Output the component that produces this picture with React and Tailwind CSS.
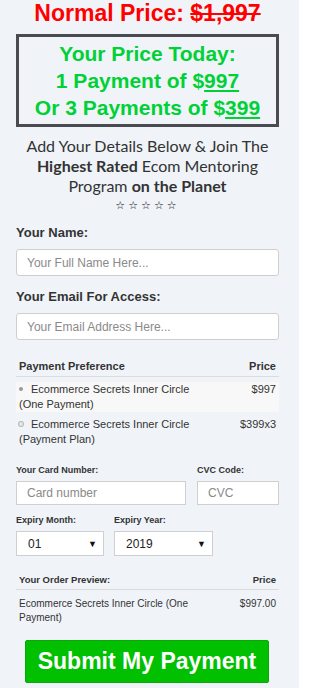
import React from "react";

const SANS = "font-['Liberation_Sans',Arial,sans-serif]";

const Field = ({ label, placeholder, className = "" }) => (
  <div className={className}>
    <div className="text-[13px] leading-[16px] font-bold text-[#333]">{label}</div>
    <input
      type="text"
      placeholder={placeholder}
      className="mt-2 block w-full h-[27px] rounded-[3px] border border-[#cfcfcf] bg-white px-[10px] text-[12px] text-[#333] placeholder:text-[#8a8a8a] outline-none"
    />
  </div>
);

const Radio = ({ on }) => (
  <span
    className={
      "inline-block w-[4px] h-[4px] rounded-full mr-[8px] align-[2px] " +
      (on ? "bg-[#9a9a9a]" : "bg-[#e6e6e6] ring-1 ring-[#b8b8b8]")
    }
  />
);

const Select = ({ value, className }) => (
  <div
    className={
      "h-[25px] flex items-center justify-between border border-[#cfcfcf] bg-white pl-[11px] pr-[6px] text-[12px] text-[#222] " +
      className
    }
  >
    <span>{value}</span>
    <span className="text-[9px] text-[#111]">▼</span>
  </div>
);

export default function App() {
  return (
    <div className={`w-[299px] min-h-[688px] bg-[#f0f4f9] pl-4 pr-5 pb-4 ${SANS}`}>
      <h1 className="text-center text-[23px] leading-[26px] font-bold text-[#ff0000]">
        Normal Price: <span className="line-through">$1,997</span>
      </h1>

      <div className="mt-2 border-[3px] border-[#4a4b50] py-[3px] text-center text-[21px] leading-[27px] font-bold text-[#00d136]">
        <div>Your Price Today:</div>
        <div>
          1 Payment of $<span className="underline underline-offset-2">997</span>
        </div>
        <div>
          Or 3 Payments of $<span className="underline underline-offset-2">399</span>
        </div>
      </div>

      <p className="mt-[9px] text-center font-['Lato',sans-serif] text-[16px] leading-[20px] text-[#333]">
        Add Your Details Below &amp; Join The <b>Highest Rated</b> Ecom Mentoring Program{" "}
        <b>on the Planet</b>
      </p>
      <div className="mt-[2px] text-center font-['DejaVu_Sans',sans-serif] text-[11px] leading-[16px] font-bold tracking-[3px] text-[#111]">
        ☆☆☆☆☆
      </div>

      <Field className="mt-[11px]" label="Your Name:" placeholder="Your Full Name Here..." />
      <Field className="mt-[13px]" label="Your Email For Access:" placeholder="Your Email Address Here..." />

      {/* Payment preference */}
      <div className="mt-4 text-[#333]">
        <div className="flex justify-between px-[3px] pt-[3px] pb-[2px] border-b border-[#dcdcdc] text-[11px] leading-[15px] font-bold">
          <span>Payment Preference</span>
          <span>Price</span>
        </div>
        <div className="mt-[5px] flex justify-between bg-[#f8f8f8] px-[3px] text-[11px] leading-[15px]">
          <span>
            <Radio on />
            Ecommerce Secrets Inner Circle
            <br />
            (One Payment)
          </span>
          <span>$997</span>
        </div>
        <div className="mt-[5px] flex justify-between px-[3px] text-[11px] leading-[15px]">
          <span>
            <Radio />
            Ecommerce Secrets Inner Circle
            <br />
            (Payment Plan)
          </span>
          <span>$399x3</span>
        </div>
      </div>

      {/* Card */}
      <div className="mt-[17px] grid grid-cols-[170px_82px] gap-x-[11px] text-[9px] leading-[12px] font-bold text-[#333]">
        <div>Your Card Number:</div>
        <div>CVC Code:</div>
        <input
          placeholder="Card number"
          className="mt-[5px] h-[24px] border border-[#cfcfcf] bg-white px-[10px] text-[12px] font-normal placeholder:text-[#8a8a8a] outline-none"
        />
        <input
          placeholder="CVC"
          className="mt-[5px] h-[24px] w-[82px] border border-[#cfcfcf] bg-white px-[10px] text-[12px] font-normal placeholder:text-[#8a8a8a] outline-none"
        />
      </div>

      <div className="mt-[9px] flex gap-[10px] text-[9px] leading-[12px] font-bold text-[#333]">
        <div className="w-[88px]">
          <div>Expiry Month:</div>
          <Select value="01" className="mt-[5px] font-normal" />
        </div>
        <div className="w-[99px]">
          <div>Expiry Year:</div>
          <Select value="2019" className="mt-[5px] font-normal" />
        </div>
      </div>

      {/* Order preview */}
      <div className="mt-[14px] text-[#333]">
        <div className="flex justify-between px-[3px] pt-[3px] pb-[3px] border-b border-[#dcdcdc] text-[9.5px] leading-[13px] font-bold">
          <span>Your Order Preview:</span>
          <span>Price</span>
        </div>
        <div className="mt-[7px] flex justify-between px-[3px] text-[10px] leading-[14px]">
          <span className="w-[175px]">Ecommerce Secrets Inner Circle (One Payment)</span>
          <span>$997.00</span>
        </div>
      </div>

      <div className="mt-[15px] px-[9px] pr-[10px]">
        <button
          type="button"
          className="w-full h-[43px] rounded-[2px] border border-[#0aa80a] bg-[#00c000] text-white text-[23px] font-bold"
        >
          Submit My Payment
        </button>
      </div>
    </div>
  );
}
